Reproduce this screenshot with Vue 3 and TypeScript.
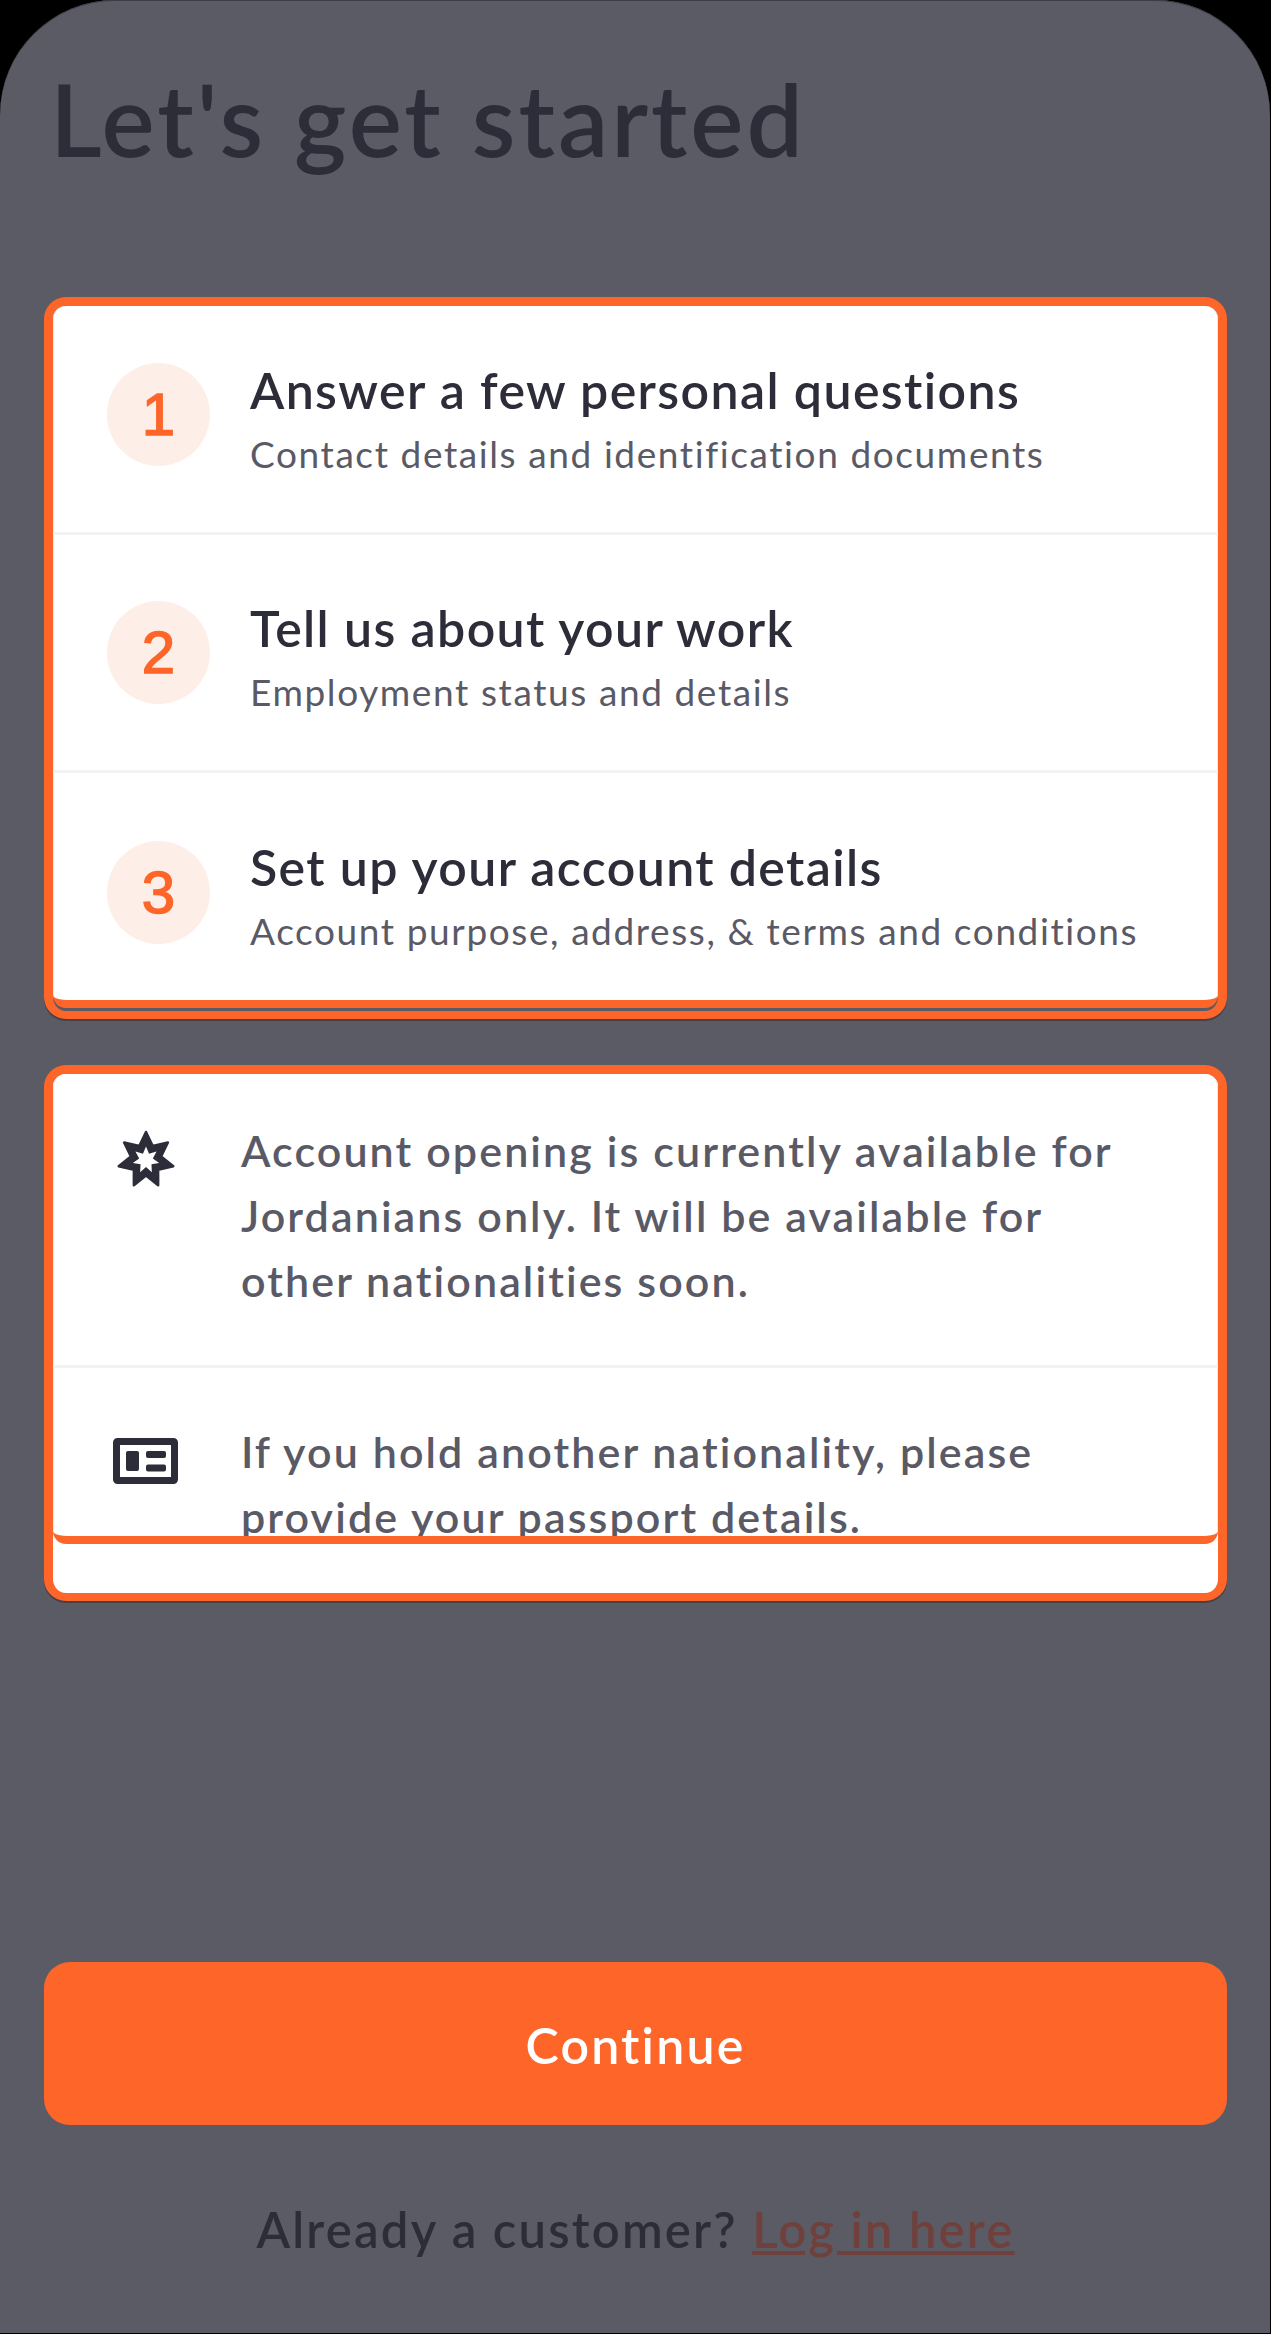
<script setup lang="ts">
interface Step { n: number; title: string; sub: string }
const steps: Step[] = [
  { n: 1, title: 'Answer a few personal questions', sub: 'Contact details and identification documents' },
  { n: 2, title: 'Tell us about your work', sub: 'Employment status and details' },
  { n: 3, title: 'Set up your account details', sub: 'Account purpose, address, & terms and conditions' },
]
function star(cx: number, cy: number, outer: number, inner: number): string {
  const pts: string[] = []
  for (let i = 0; i < 14; i++) {
    const r = i % 2 === 0 ? outer : inner
    const a = -Math.PI / 2 + (i * Math.PI) / 7
    pts.push(`${(cx + r * Math.cos(a)).toFixed(2)} ${(cy + r * Math.sin(a)).toFixed(2)}`)
  }
  return 'M' + pts.join('L') + 'Z'
}
const starOuter = star(32, 32, 28, 15.5)
const starHole = star(32, 32, 13.5, 7)
</script>

<template>
  <main class="screen">
    <div class="phone">
      <h1 class="title">Let's get started</h1>

      <section class="card steps-card">
        <div class="overlay steps-overlay">
          <div v-for="s in steps" :key="s.n" class="step">
            <span class="num">{{ s.n }}</span>
            <div class="step-text">
              <div class="step-title">{{ s.title }}</div>
              <div class="step-sub">{{ s.sub }}</div>
            </div>
          </div>
        </div>
      </section>

      <section class="card info-card">
        <div class="overlay info-overlay">
          <div class="info first">
            <svg class="ic-star" width="64" height="64" viewBox="0 0 64 64">
              <path :d="starOuter" fill="#2d2d3a" stroke="#2d2d3a" stroke-width="2.500" stroke-linejoin="round" />
              <path :d="starHole" fill="#fff" />
            </svg>
            <p>Account opening is currently available for Jordanians only. It will be available for other nationalities soon.</p>
          </div>
          <div class="info second">
            <svg class="ic-id" width="66" height="47" viewBox="0 0 66 47">
              <rect x="3.500" y="3.500" width="58" height="39" rx="1" fill="none" stroke="#2d2d3a" stroke-width="7" />
              <rect x="13" y="13" width="13" height="20" rx="2" fill="#2d2d3a" />
              <rect x="33" y="13" width="20" height="7" rx="2" fill="#2d2d3a" />
              <rect x="33" y="26.500" width="20" height="7" rx="2" fill="#2d2d3a" />
            </svg>
            <p>If you hold another nationality, please provide your passport details.</p>
          </div>
        </div>
      </section>

      <button class="cta" type="button">Continue</button>
      <p class="footer">Already a customer? <a class="link">Log in here</a></p>
    </div>
  </main>
</template>

<style>
html, body { margin: 0; background: #000; }
</style>

<style scoped>
.screen { width: 1271px; height: 2334px; background: #000; overflow: hidden; font-family: Lato, "Noto Sans", sans-serif; }
.phone {
  box-sizing: border-box; width: 1270px; height: 2333px; padding: 0 43px 0 44px;
  background: #5b5b65; border-radius: 115px 115px 0 0; display: flex; flex-direction: column;
  box-shadow: inset 0 1px 0 #3d3d4a;
}
.title { margin: 58px 0 0 6px; height: 239px; font-size: 100px; line-height: 120px; font-weight: 600; color: #2d2d3a; letter-spacing: 3px; }
.card { box-sizing: border-box; border: 9px solid #fd6529; border-bottom-width: 8px; border-radius: 22px; box-shadow: 0 2px 0 #4a3f42; }
.steps-card { height: 722px; background: #5b5b65; padding-bottom: 3px; }
.overlay { box-sizing: border-box; background: #fff; border-bottom: 8px solid #fd6529; border-radius: 13px; overflow: hidden; box-shadow: inset 1px 0 0 #e9e9e9, inset -1px 0 0 #e9e9e9; }
.steps-overlay { height: 702px; }
.step { box-sizing: border-box; height: 238px; padding: 0 40px 0 54px; display: flex; align-items: center; gap: 40px; border-bottom: 3px solid #f2f2f4; }
.step:first-child { margin-top: -9px; }
.step:last-child { border-bottom: 0; }
.num { flex: none; width: 103px; height: 103px; border-radius: 50%; background: #fdeee7; color: #fd6529; font: 400 60px/103px "Liberation Sans", Arial, sans-serif; -webkit-text-stroke: 1.5px #fd6529; text-align: center; }
.step-text { padding-top: 7px; }
.step-title { font-size: 50px; line-height: 60px; font-weight: 600; color: #2d2d3a; letter-spacing: 1.4px; }
.step-sub { margin-top: 11px; font-size: 37px; line-height: 46px; color: #5a5a66; letter-spacing: 1.6px; }
.info-card { margin-top: 46px; height: 536px; background: #fff; }
.info-overlay { height: 470px; }
.info { display: grid; grid-template-columns: 186px 900px; box-sizing: border-box; }
.info.first { height: 294px; border-bottom: 3px solid #f2f2f4; padding-top: 44px; }
.info.second { padding-top: 51px; }
.info p { margin: 0 0 0 2px; font-size: 43px; line-height: 65px; font-weight: 600; color: #5a5a66; letter-spacing: 2.1px; }
.ic-star { justify-self: center; margin-top: 10px; }
.ic-id { justify-self: center; margin-top: 19px; }
.cta { margin-top: 361px; height: 163px; border: 0; border-radius: 26px; padding-top: 4px; background: #fd6529; color: #fff; font: 600 50px Lato, sans-serif; letter-spacing: 2.2px; }
.footer { margin: 74px 0 0; text-align: center; font-size: 49px; line-height: 60px; font-weight: 600; color: #2d2d3a; letter-spacing: 2.2px; }
.link { color: #6f403c; text-decoration: underline; }
</style>
